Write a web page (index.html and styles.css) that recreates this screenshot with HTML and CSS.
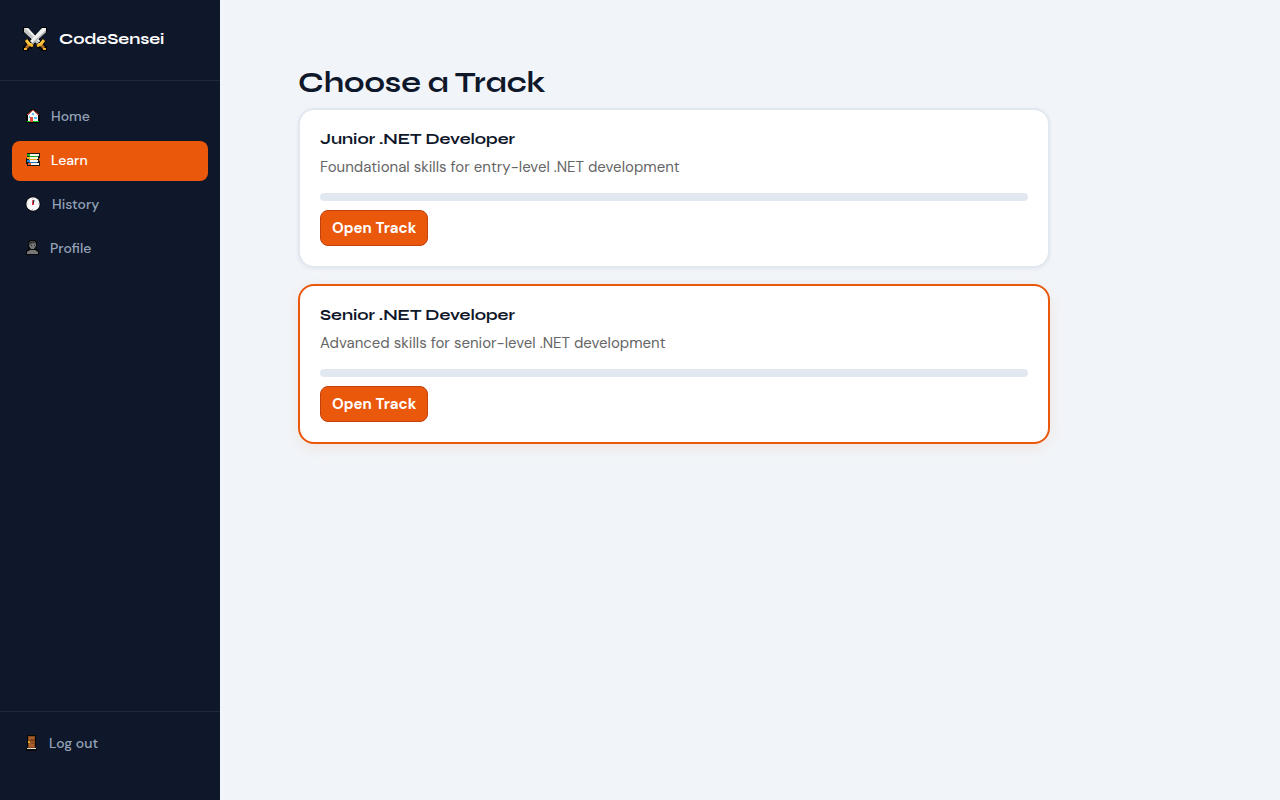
FILE: index.html
```html
<!DOCTYPE html>
<html lang="en">
<head>
<meta charset="utf-8">
<meta name="viewport" content="width=device-width, initial-scale=1">
<title>CodeSensei</title>
<link rel="stylesheet" href="styles.css">
</head>
<body>
<div class="app">
  <aside class="sidebar">
    <div class="brand">
      <svg class="brand-icon" viewBox="0 0 26 26" aria-hidden="true">
        <g fill="none" stroke="#000">
          <path d="M3 3l20 20M23 3L3 23" stroke-width="6"/>
          <path d="M22 14l-3 4-4 3M4 14l3 4 4 3" stroke-width="5"/>
          <path d="M1 1h6v6H1zM19 1h6v6h-6zM1 20h6v5H1zM19 20h6v5h-6z" fill="#000" stroke="none"/>
        </g>
        <path d="M2 2h4l12 13-3 3L2 6z" fill="#c6c6c6"/>
        <path d="M3 2h3l12 13-1 1z" fill="#f0f0f0"/>
        <path d="M24 2h-4L8 15l3 3L24 6z" fill="#f0f0f0"/>
        <path d="M24 4v2L11 18l-1-1z" fill="#b2b2b2"/>
        <path d="M18 18l4 4M8 18l-4 4" stroke="#a96927" stroke-width="3"/>
        <path d="M21 22h3v2h-3zM2 22h3v2H2z" fill="#f0b02d"/>
        <path d="M22 14l-3 4-4 2M4 14l3 4 4 2" fill="none" stroke="#f5b82e" stroke-width="3"/>
        <path d="M21 14l-2 3-3 1M5 14l2 3 3 1" fill="none" stroke="#ffd75d" stroke-width="1"/>
      </svg>
      <span>CodeSensei</span>
    </div>
    <nav class="nav" aria-label="Main">
      <a class="nav-link" href="#home">
        <svg class="icon" viewBox="-1 0 16 16" aria-hidden="true">
          <path d="M0 7l6-6h2l6 6v8H0z" fill="#050505"/>
          <path d="M2 7l5-5 5 5v7H2z" fill="#f3f6f8"/>
          <path d="M1 7l6-5 6 5" fill="none" stroke="#d94836" stroke-width="1"/>
          <path d="M6 5h2v2H6zM8 9h3v2H8zM3 8h1v2H3z" fill="#58c5f3"/>
          <path d="M4 9h3v5H4z" fill="#e14b3c"/>
          <path d="M1 13h3v1H1zM7 13h6v1H7z" fill="#08c51a"/>
        </svg>
        <span>Home</span>
      </a>
      <a class="nav-link active" href="#learn" aria-current="page">
        <svg class="icon" viewBox="-1 0 16 16" aria-hidden="true">
          <path d="M1 1h13v5h-1v3h1v5H1v-2H0V6h1z" fill="#181b1c"/>
          <path d="M1 2h4v2H1z" fill="#12b51c"/><path d="M4 2h9v2H4z" fill="#f8f8ef"/><path d="M3 4h9v1H3z" fill="#15a31a"/>
          <path d="M1 5h3v2H1z" fill="#f1b42c"/><path d="M4 5h8v2H4z" fill="#fff8df"/><path d="M3 7h8v1H3z" fill="#e5a027"/>
          <path d="M1 8h3v2H1z" fill="#2388da"/><path d="M4 8h8v2H4z" fill="#f6f6f6"/><path d="M3 10h8v1H3z" fill="#2175bb"/>
          <path d="M2 11h3v2H2z" fill="#e5532c"/><path d="M5 11h8v2H5z" fill="#f8f3e8"/>
        </svg>
        <span>Learn</span>
      </a>
      <a class="nav-link" href="#history">
        <svg class="icon icon-wide" viewBox="0 0 17 16" aria-hidden="true">
          <circle cx="8" cy="8" r="7.5" fill="#050505"/>
          <circle cx="8" cy="8" r="6.7" fill="#f7f7f7"/>
          <path d="M7.5 2v1M7.5 13v1M2 8h1M13 8h1" stroke="#bbb"/>
          <path d="M8 8l1-4" stroke="#222" stroke-width="1.2"/>
          <path d="M7.5 9V4" stroke="#d9162c" stroke-width="0.7"/>
          <circle cx="8" cy="8" r="1" fill="#d9162c"/>
        </svg>
        <span>History</span>
      </a>
      <a class="nav-link" href="#profile">
        <svg class="icon icon-narrow" viewBox="-1 0 15 16" aria-hidden="true">
          <path d="M4 0h5l2 2v5l-1 2h2l1 2v4H0v-4l1-2h2L2 7V2z" fill="#080a0c"/>
          <path d="M4 2l1-1h3l2 2v3L8 9H5L3 6z" fill="#777"/>
          <path d="M1 14v-2l3-2h5l3 2v2z" fill="#777"/>
          <path d="M3 3l2-2h3l2 2v1L8 3 5 4 3 5z" fill="#3d3d3d"/>
          <path d="M5 5h1v1H5zM8 5h1v1H8z" fill="#222"/>
        </svg>
        <span>Profile</span>
      </a>
    </nav>
    <div class="sidebar-footer">
      <button class="nav-link logout" type="button">
        <svg class="icon icon-door" viewBox="-1 0 14 16" aria-hidden="true">
          <path d="M1 0h9v13h1v3H0v-3h1z" fill="#070707"/>
          <path d="M2 1h7v12H2z" fill="#87471e"/>
          <path d="M3 2h5v3H3zM3 7h5v5H3z" fill="#a75f2c"/>
          <path d="M4 4h4v1H4zM5 8h3v1H5z" fill="#7d421d"/>
          <path d="M2 6h2v2H2z" fill="#d5a621"/>
          <path d="M1 13h9v1H1z" fill="#ddd"/>
        </svg>
        <span>Log out</span>
      </button>
    </div>
  </aside>
  <main class="main">
    <h1 class="page-title">Choose a Track</h1>
    <div class="tracks">
      <article class="card">
        <h2 class="card-title">Junior .NET Developer</h2>
        <p class="card-text">Foundational skills for entry-level .NET development</p>
        <progress class="progress" value="0" max="100" aria-label="Junior .NET Developer progress"></progress>
        <button class="button" type="button">Open Track</button>
      </article>
      <article class="card selected">
        <h2 class="card-title">Senior .NET Developer</h2>
        <p class="card-text">Advanced skills for senior-level .NET development</p>
        <progress class="progress" value="0" max="100" aria-label="Senior .NET Developer progress"></progress>
        <button class="button" type="button">Open Track</button>
      </article>
    </div>
  </main>
</div>
</body>
</html>
```
FILE: styles.css
```css
* { box-sizing: border-box; }

body {
  margin: 0;
  background: #f1f5f9;
  color: #0f172a;
  font-family: "DM Sans", Inter, "Liberation Sans", sans-serif;
  font-size: 15px;
}

.app { display: flex; min-height: 100vh; }

.sidebar {
  display: flex;
  flex: 0 0 220px;
  flex-direction: column;
  background: #0f172a;
}

.brand {
  display: flex;
  align-items: center;
  gap: 11px;
  padding: 24px 22px 26px;
  border-bottom: 1px solid #212939;
  color: #fff;
  font-family: Syne, Inter, sans-serif;
  font-size: 16px;
  font-weight: 700;
  line-height: 30px;
}

.brand-icon { width: 26px; height: 26px; }

.nav {
  display: flex;
  flex: 1;
  flex-direction: column;
  gap: 4px;
  padding: 16px 12px;
}

.nav-link {
  display: flex;
  align-items: center;
  gap: 10px;
  width: 100%;
  height: 40px;
  padding: 0 13px 2px;
  border: 0;
  border-radius: 8px;
  background: transparent;
  color: #94a3b8;
  font: 500 14px/20px "DM Sans", Inter, sans-serif;
  text-decoration: none;
}

.nav-link.active { background: #ea580c; color: #fff; }

.icon { width: 16px; height: 16px; }
.icon-wide { width: 17px; }
.icon-narrow { width: 15px; }
.icon-door { width: 14px; }

.sidebar-footer {
  padding: 12px 12px 36px;
  border-top: 1px solid #212939;
}

.logout { cursor: pointer; }

.main { flex: 1; padding: 64px 78px; }

.page-title {
  margin: 0 0 6px;
  font: 700 29px/38px Syne, Inter, sans-serif;
}

.tracks {
  display: flex;
  flex-direction: column;
  gap: 16px;
  max-width: 752px;
}

.card {
  display: flex;
  flex-direction: column;
  align-items: flex-start;
  padding: 18px 20px 20px;
  border: 2px solid #e2e8f0;
  border-radius: 16px;
  background: #fff;
  box-shadow: 0 1px 4px rgba(15, 23, 42, 0.06);
}

.card.selected {
  border-color: #ea580c;
  box-shadow: 0 4px 16px rgba(234, 88, 12, 0.1);
}

.card-title {
  margin: 0 0 6px;
  font: 700 16px/22px Syne, Inter, sans-serif;
}

.card-text {
  margin: 0 0 15px;
  color: #666;
  line-height: 22px;
}

.progress {
  display: block;
  width: 100%;
  height: 8px;
  margin-bottom: 9px;
  overflow: hidden;
  border: 0;
  border-radius: 4px;
  background: #e2e8f0;
  appearance: none;
}

.progress::-webkit-progress-bar { background: #e2e8f0; }
.progress::-webkit-progress-value { background: #ea580c; }

.button {
  height: 36px;
  padding: 0 11px;
  border: 1px solid #c2410c;
  border-radius: 8px;
  background: #ea580c;
  color: #fff;
  font: 700 15px/20px "DM Sans", Inter, sans-serif;
  cursor: pointer;
}
```
